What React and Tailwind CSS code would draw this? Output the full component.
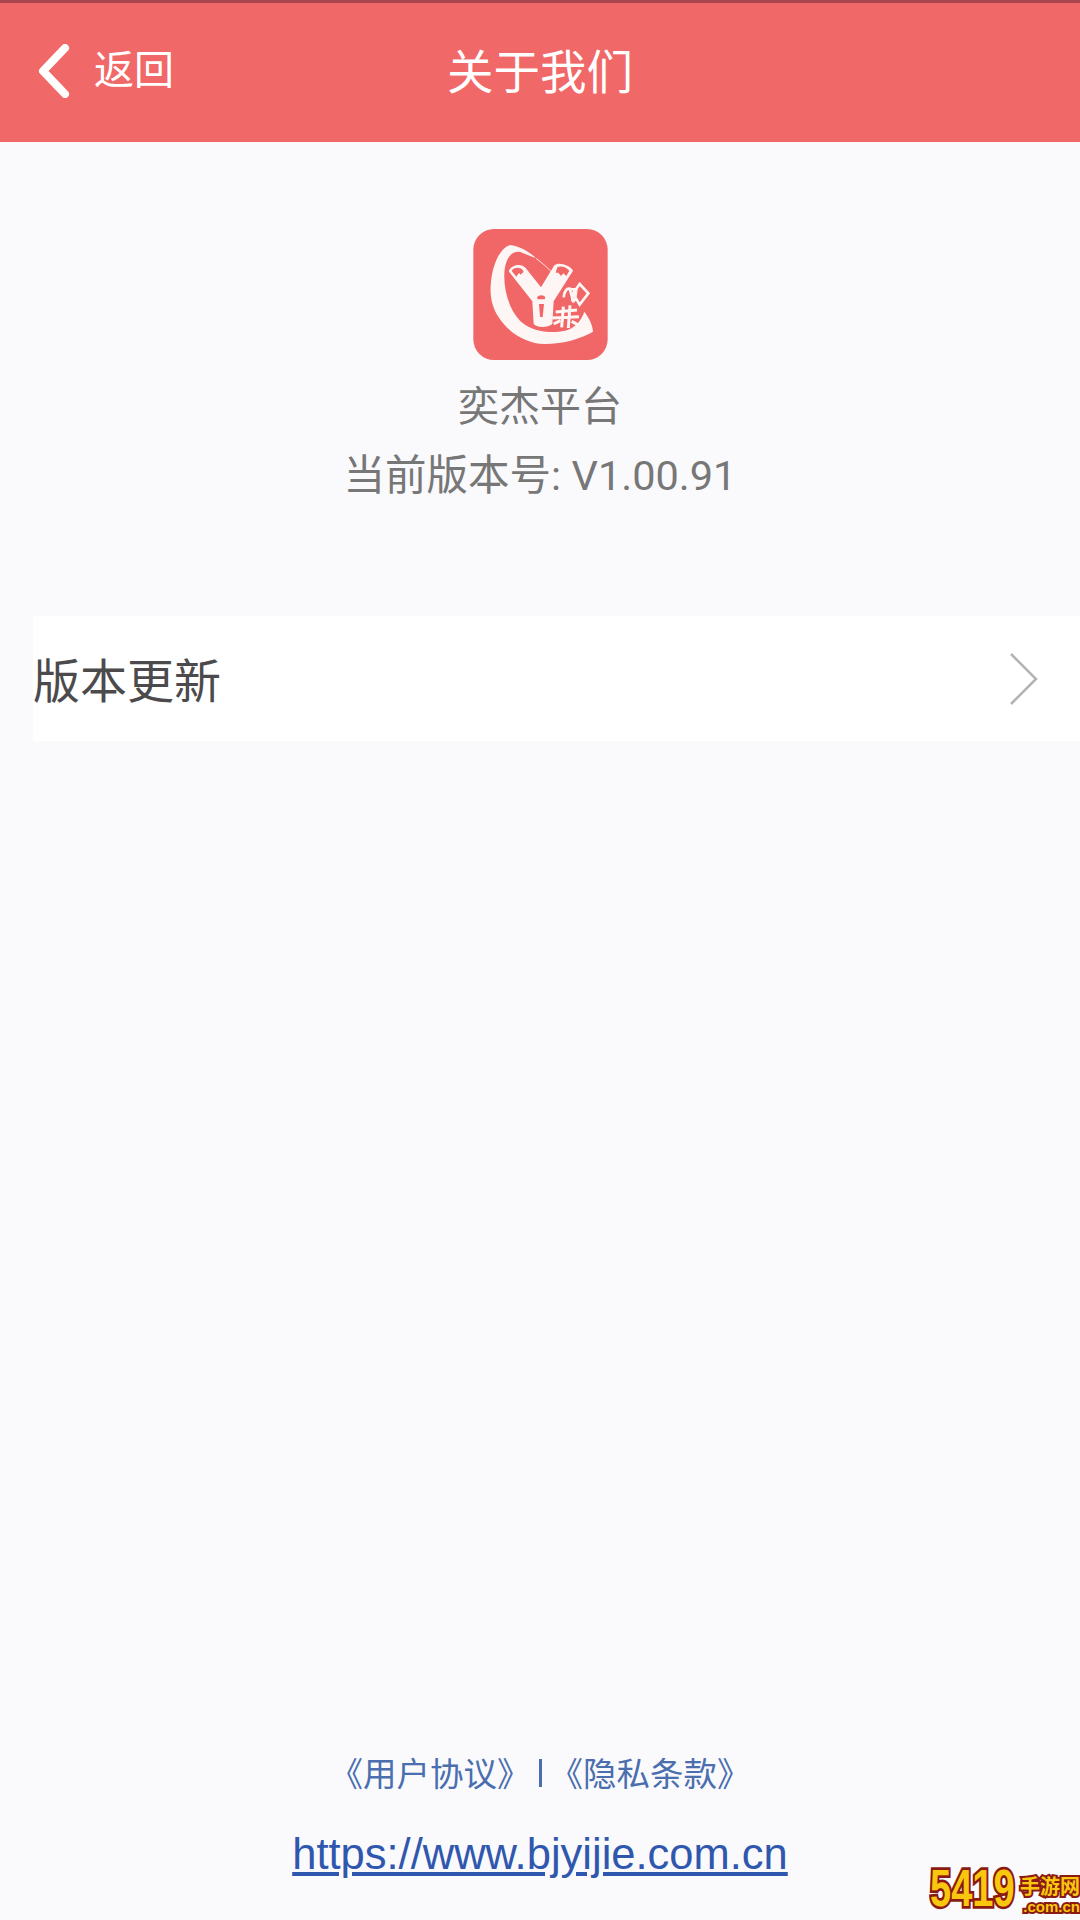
const cjk = 'font-["Roboto","Noto_Sans_CJK_SC",sans-serif]';

function Logo() {
  return (
    <svg viewBox="97 57 403 393" className="w-[135px] h-[131px] block">
      <rect x="97" y="57" width="403" height="393" rx="62" fill="#f16768" />
      <path d="M208 105C232 108 262 122 285 145L238 126C208 122 192 150 190 190C188 240 204 300 240 335C275 365 330 372 372 362C400 355 420 335 430 305C445 325 455 345 456 365C420 385 370 402 310 402C260 402 205 370 175 325C150 290 146 250 150 215C155 165 175 115 208 105Z" fill="#fdf6f4" />
      <path d="M285 145C305 160 325 178 342 196" stroke="#fdf6f4" strokeWidth="2.5" fill="none" />
      <path d="M203 184C210 164 240 158 254 174L300 232L340 166C352 154 388 166 396 182L338 274L334 342C320 354 288 354 278 342L274 274Z" fill="#fdf6f4" />
      <path d="M212 183C218 172 236 170 245 180L248 186L238 194L234 188L226 200ZM349 172C358 166 376 170 385 182L376 198L367 190L360 198L352 188L344 188Z" fill="#f16768" />
      <path d="M288 262C293 254 309 254 313 262L311 268L290 268ZM294 282L309 282L305 322L297 320Z" fill="#f16768" />
      <path d="M368 262C370 243 378 234 386 236L398 278M388 238L406 238L402 270L390 270M416 222L442 250L416 284L396 250Z" stroke="#fdf6f4" strokeWidth="8" fill="none" />
      <path d="M367 290L362 352M387 286L382 354M334 324L414 320M344 306L408 300M392 334L414 346M338 342L358 332" stroke="#fdf6f4" strokeWidth="9" fill="none" />
    </svg>
  );
}

function Watermark() {
  const outline = '[-webkit-text-stroke:4px_#8a1a12] [paint-order:stroke_fill]';
  return (
    <div className="absolute right-0 bottom-[6px] w-[150px] h-[48px] flex items-end justify-between whitespace-nowrap font-['Liberation_Sans',sans-serif] font-bold text-[#f9c80e] leading-none">
      <span className={`text-[38px] origin-bottom scale-y-[1.35] ${outline}`}>5419</span>
      <div className="flex flex-col items-end gap-[3px]">
        <span className={`text-[20px] ${outline} font-['Noto_Sans_CJK_SC',sans-serif]`}>手游网</span>
        <span className={`text-[15px] ${outline}`}>.com.cn</span>
      </div>
    </div>
  );
}

export default function App() {
  return (
    <div className={`relative w-[1080px] h-[1920px] overflow-hidden flex flex-col bg-[#fafafd] ${cjk}`}>
      <header className="relative h-[142px] shrink-0 bg-[#f16868] border-t-[3px] border-[#a8454d] flex items-center justify-center">
        <div className="absolute left-[38px] top-[41px] flex items-center gap-[24px]">
          <svg width="32" height="54" viewBox="0 0 32 54" fill="none">
            <path d="M27 4L5 27L27 50" stroke="#fff" strokeWidth="8" strokeLinecap="round" strokeLinejoin="round" />
          </svg>
          <span className="text-[40px] leading-none text-white">返回</span>
        </div>
        <h1 className="text-[46.5px] leading-none font-normal text-white mt-[2px]">关于我们</h1>
      </header>

      <section className="flex flex-col items-center pt-[87px]">
        <Logo />
        <p className="text-[41px] leading-[48px] text-[#777777] mt-[23px]">奕杰平台</p>
        <p className="text-[41.5px] leading-[48px] text-[#777777] mt-[21px]">当前版本号: V1.00.91</p>
      </section>

      <div className="ml-[33px] mt-[116px] h-[125px] bg-white flex items-center justify-between pr-[41px]">
        <span className="text-[47px] leading-none text-[#4c4a4c] mt-[6px]">版本更新</span>
        <svg width="30" height="54" viewBox="0 0 30 54" fill="none">
          <path d="M2 2L27 27L2 52" stroke="#b3b3b3" strokeWidth="2.5" />
        </svg>
      </div>

      <footer className="mt-auto flex flex-col items-center pb-[44px]">
        <div className="flex items-center text-[33.5px] leading-[44px] text-[#4a6eae]">
          <span>《用户协议》</span>
          <span className="w-[3px] h-[28px] bg-[#4a6eae] mx-[8px] mb-[4px]" />
          <span>《隐私条款》</span>
        </div>
        <a className="mt-[35px] text-[43.5px] leading-[44px] text-[#3057ae] underline font-['Liberation_Sans',sans-serif]">https://www.bjyijie.com.cn</a>
      </footer>

      <Watermark />
    </div>
  );
}
